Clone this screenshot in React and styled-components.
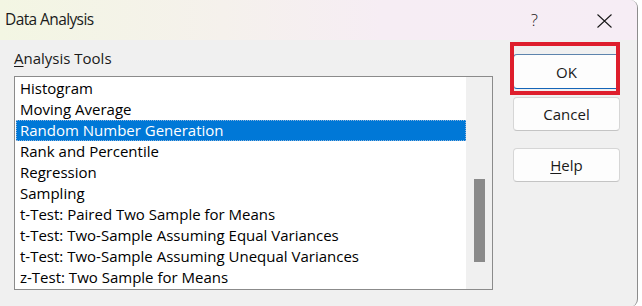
import React from "react";
import styled, { createGlobalStyle } from "styled-components";

const GlobalStyle = createGlobalStyle`
  html, body {
    margin: 0;
    background: #ffffff;
  }
  body {
    font-family: "Open Sans", "Noto Sans", sans-serif;
    color: #000000;
  }
`;

const Window = styled.div`
  width: 637px;
  height: 307px;
  border-right: 1px solid #8c8c8c;
  border-radius: 0 8px 8px 0;
  overflow: hidden;
  display: flex;
  flex-direction: column;
  background: #f0f0f0;
`;

const TitleBar = styled.div`
  height: 40px;
  flex-shrink: 0;
  display: flex;
  align-items: center;
  padding-left: 5px;
  background: linear-gradient(90deg, #f3f6e3 0%, #f5f1ec 35%, #f6edf4 60%, #f6edf5 100%);
`;

const Title = styled.div`
  flex: 1;
  font-size: 15.5px;
  letter-spacing: -0.6px;
  color: #1a1a1a;
  margin-top: -2px;
`;

const Help = styled.div`
  font-size: 17px;
  font-weight: 300;
  color: #1a1a1a;
  margin-right: 59px;
  margin-top: -1px;
`;

const CloseIcon = styled.svg`
  width: 15px;
  height: 14px;
  margin-right: 25px;
  margin-top: 2px;
`;

const Body = styled.div`
  flex: 1;
  display: flex;
`;

const LeftCol = styled.div`
  padding-left: 14px;
  width: 479px;
`;

const Label = styled.div`
  margin-top: 8px;
  height: 20px;
  line-height: 20px;
  font-size: 15px;
  color: #1a1a1a;
`;

const Key = styled.span`
  text-decoration: underline;
  text-underline-offset: 2px;
  text-decoration-thickness: 1px;
`;

const ListBox = styled.div`
  margin-top: 8px;
  height: 212px;
  border: 1px solid #8b8b8b;
  background: #ffffff;
  display: flex;
`;

const Items = styled.div`
  flex: 1;
  padding: 1px 0 0 1px;
`;

const Item = styled.div`
  height: 21px;
  line-height: 21px;
  padding-left: 4px;
  font-size: 15px;
  white-space: nowrap;
  box-sizing: border-box;
  color: ${(p) => (p.$selected ? "#ffffff" : "#000000")};
  background: ${(p) => (p.$selected ? "#0078d7" : "transparent")};
  outline: ${(p) => (p.$selected ? "1px dotted #8db4dc" : "none")};
  outline-offset: -1px;
`;

const ScrollTrack = styled.div`
  width: 26px;
  background: #f0f0f0;
  display: flex;
  justify-content: center;
  padding-top: 102px;
  box-sizing: border-box;
`;

const Thumb = styled.div`
  width: 11px;
  height: 83px;
  margin-left: 1px;
  background: #8a8a8a;
`;

const RightCol = styled.div`
  margin-left: 20px;
  padding-top: 14px;
  display: flex;
  flex-direction: column;
`;

const Button = styled.div`
  position: relative;
  width: 107px;
  height: ${(p) => (p.$tall ? 35 : 34)}px;
  margin-top: ${(p) => p.$gap || 0}px;
  box-sizing: border-box;
  border: 1px solid ${(p) => (p.$default ? "#5d84ad" : "#d6d6d6")};
  border-bottom-color: ${(p) => (p.$default ? "#1565b8" : "#c4c4c4")};
  border-radius: 4px;
  background: #fdfdfd;
  display: flex;
  align-items: center;
  justify-content: center;
  font-size: 15px;
  color: #1a1a1a;
`;

const Highlight = styled.div`
  position: absolute;
  left: -4px;
  top: -13px;
  width: 110px;
  height: 53px;
  border: 4px solid #de1e2c;
  box-sizing: border-box;
  pointer-events: none;
`;

const tools = [
  "Histogram",
  "Moving Average",
  "Random Number Generation",
  "Rank and Percentile",
  "Regression",
  "Sampling",
  "t-Test: Paired Two Sample for Means",
  "t-Test: Two-Sample Assuming Equal Variances",
  "t-Test: Two-Sample Assuming Unequal Variances",
  "z-Test: Two Sample for Means",
];

export default function App() {
  return (
    <>
      <GlobalStyle />
      <Window>
        <TitleBar>
          <Title>Data Analysis</Title>
          <Help>?</Help>
          <CloseIcon viewBox="0 0 15 14">
            <path d="M0.5 0.5 L14.5 13.5 M14.5 0.5 L0.5 13.5" stroke="#1a1a1a" strokeWidth="1.1" fill="none" />
          </CloseIcon>
        </TitleBar>
        <Body>
          <LeftCol>
            <Label>
              <Key>A</Key>nalysis Tools
            </Label>
            <ListBox>
              <Items>
                {tools.map((t) => (
                  <Item key={t} $selected={t === "Random Number Generation"}>
                    {t}
                  </Item>
                ))}
              </Items>
              <ScrollTrack>
                <Thumb />
              </ScrollTrack>
            </ListBox>
          </LeftCol>
          <RightCol>
            <Button $default $tall>
              OK
              <Highlight />
            </Button>
            <Button $gap={8}>Cancel</Button>
            <Button $gap={17}>
              <span>
                <Key>H</Key>elp
              </span>
            </Button>
          </RightCol>
        </Body>
      </Window>
    </>
  );
}
